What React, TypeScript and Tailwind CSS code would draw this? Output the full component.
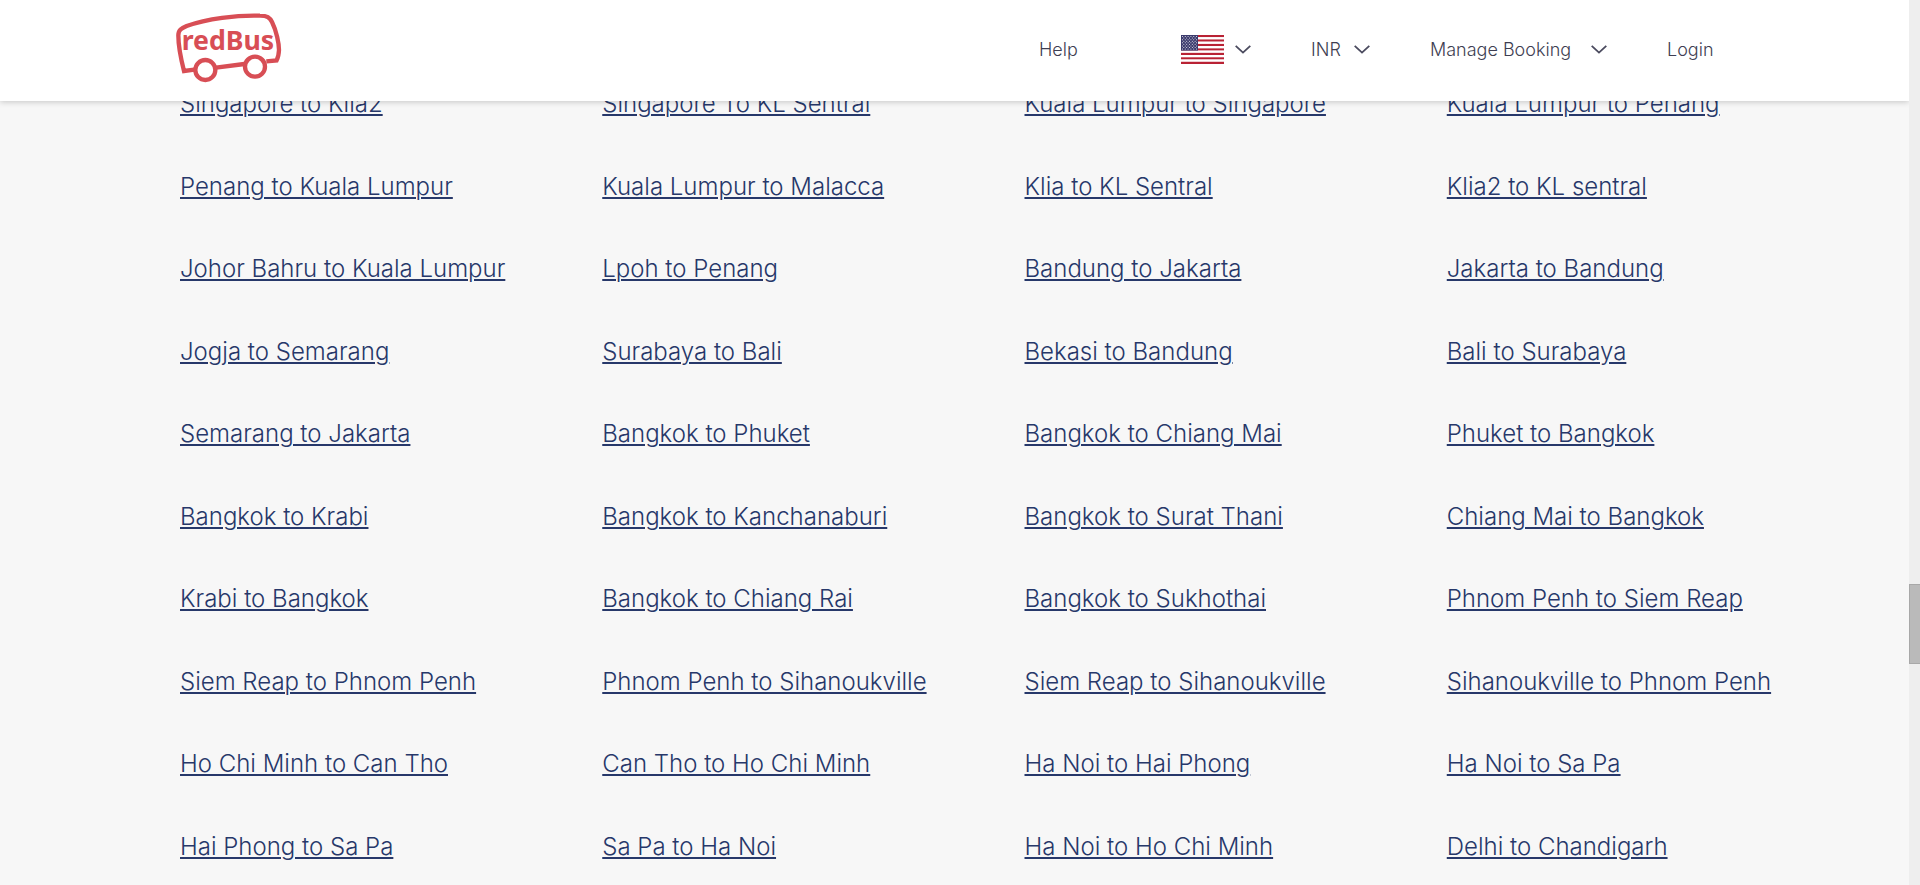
import { useState } from "react";

const routes: string[] = [
  "Singapore to Klia2", "Singapore To KL Sentral", "Kuala Lumpur to Singapore", "Kuala Lumpur to Penang",
  "Penang to Kuala Lumpur", "Kuala Lumpur to Malacca", "Klia to KL Sentral", "Klia2 to KL sentral",
  "Johor Bahru to Kuala Lumpur", "Lpoh to Penang", "Bandung to Jakarta", "Jakarta to Bandung",
  "Jogja to Semarang", "Surabaya to Bali", "Bekasi to Bandung", "Bali to Surabaya",
  "Semarang to Jakarta", "Bangkok to Phuket", "Bangkok to Chiang Mai", "Phuket to Bangkok",
  "Bangkok to Krabi", "Bangkok to Kanchanaburi", "Bangkok to Surat Thani", "Chiang Mai to Bangkok",
  "Krabi to Bangkok", "Bangkok to Chiang Rai", "Bangkok to Sukhothai", "Phnom Penh to Siem Reap",
  "Siem Reap to Phnom Penh", "Phnom Penh to Sihanoukville", "Siem Reap to Sihanoukville", "Sihanoukville to Phnom Penh",
  "Ho Chi Minh to Can Tho", "Can Tho to Ho Chi Minh", "Ha Noi to Hai Phong", "Ha Noi to Sa Pa",
  "Hai Phong to Sa Pa", "Sa Pa to Ha Noi", "Ha Noi to Ho Chi Minh", "Delhi to Chandigarh",
];

function Logo() {
  return (
    <svg viewBox="45 36 321 213" className="block h-[71px] w-[107px]" aria-hidden="true">
      <g fill="none" stroke="#d84e55" strokeWidth="13">
        <path d="M103 209 L72 213 C61 170 55 130 55 106 C55 90 64 85 80 78 C140 56 230 45 300 47 C322 47 329 52 336 66 C349 92 357 130 357 150 Q356 170 350 181 L319 184" />
        <path d="M168 203 L253 192" />
        <circle cx="136" cy="210" r="30" />
        <circle cx="285" cy="200" r="30" />
      </g>
      <text x="65" y="149" fontSize="80" fontWeight="700" fill="#d84e55" className="font-['Noto_Sans',sans-serif]">
        redBus
      </text>
    </svg>
  );
}

function Chevron() {
  return (
    <svg viewBox="0 0 16 9" className="h-[9px] w-4" fill="none" stroke="#4a4a5e" strokeWidth="1.8" aria-hidden="true">
      <path d="M0.7 0.8 L8 7.6 L15.3 0.8" />
    </svg>
  );
}

function Flag() {
  const stripes = Array.from({ length: 13 }, (_, i) => i);
  const rows = Array.from({ length: 9 }, (_, i) => i);
  return (
    <svg viewBox="0 0 43 29" className="h-[29px] w-[43px]" preserveAspectRatio="none" aria-hidden="true">
      {stripes.map((i) => (
        <rect key={i} y={(i * 29) / 13} width="43" height={29 / 13} fill={i % 2 ? "#ffffff" : "#b92234"} />
      ))}
      <rect width="17" height="15.6" fill="#3c3b6e" />
      {rows.map((r) =>
        Array.from({ length: r % 2 ? 5 : 6 }, (_, c) => (
          <circle key={`${r}-${c}`} cx={(r % 2 ? 2.83 : 1.42) + c * 2.83} cy={1.56 * (r + 1)} r="0.5" fill="#ffffff" />
        ))
      )}
    </svg>
  );
}

function Header() {
  const [open, setOpen] = useState<string | null>(null);
  const toggle = (name: string) => setOpen(open === name ? null : name);
  return (
    <header className="relative z-10 flex h-[101px] items-center justify-between bg-white pr-[193px] pb-0.5 pl-[175px] shadow-[0_1px_6px_rgba(0,0,0,0.2)]">
      <a href="#home" aria-label="redBus" className="pb-1">
        <Logo />
      </a>
      <nav className="flex items-center gap-[60px] text-[18px] leading-6 font-light text-[#3e3e52]">
        <a href="#help" className="w-[82px]">Help</a>
        <button type="button" aria-label="Country" aria-expanded={open === "country"} onClick={() => toggle("country")} className="flex w-[70px] items-center justify-between">
          <Flag />
          <Chevron />
        </button>
        <button type="button" aria-expanded={open === "currency"} onClick={() => toggle("currency")} className="flex w-[59px] items-center justify-between">
          INR
          <Chevron />
        </button>
        <button type="button" aria-expanded={open === "booking"} onClick={() => toggle("booking")} className="flex w-[177px] items-center justify-between whitespace-nowrap">
          Manage Booking
          <Chevron />
        </button>
        <a href="#login" className="w-[49px]">Login</a>
      </nav>
    </header>
  );
}

export default function App() {
  return (
    <div className="flex h-screen overflow-hidden bg-[#f7f7f7] font-['Inter','Liberation_Sans',sans-serif]">
      <div className="min-w-0 flex-1">
        <Header />
        <main className="-mt-[15px] pr-10 pl-[180px]">
          <ul className="grid auto-rows-[83px_82px] grid-cols-4">
            {routes.map((route) => (
              <li key={route}>
                <a
                  href={`#${route.toLowerCase().replaceAll(" ", "-")}`}
                  className="text-[24px] leading-9 font-light whitespace-nowrap text-[#27386a] underline decoration-2 underline-offset-2"
                >
                  {route}
                </a>
              </li>
            ))}
          </ul>
        </main>
      </div>
      <div className="relative z-20 w-[11px] shrink-0 bg-[#eeeeee] pt-[584px]" aria-hidden="true">
        <div className="h-20 border border-r-0 border-[#a8a8a8] bg-[#bababa]" />
      </div>
    </div>
  );
}
